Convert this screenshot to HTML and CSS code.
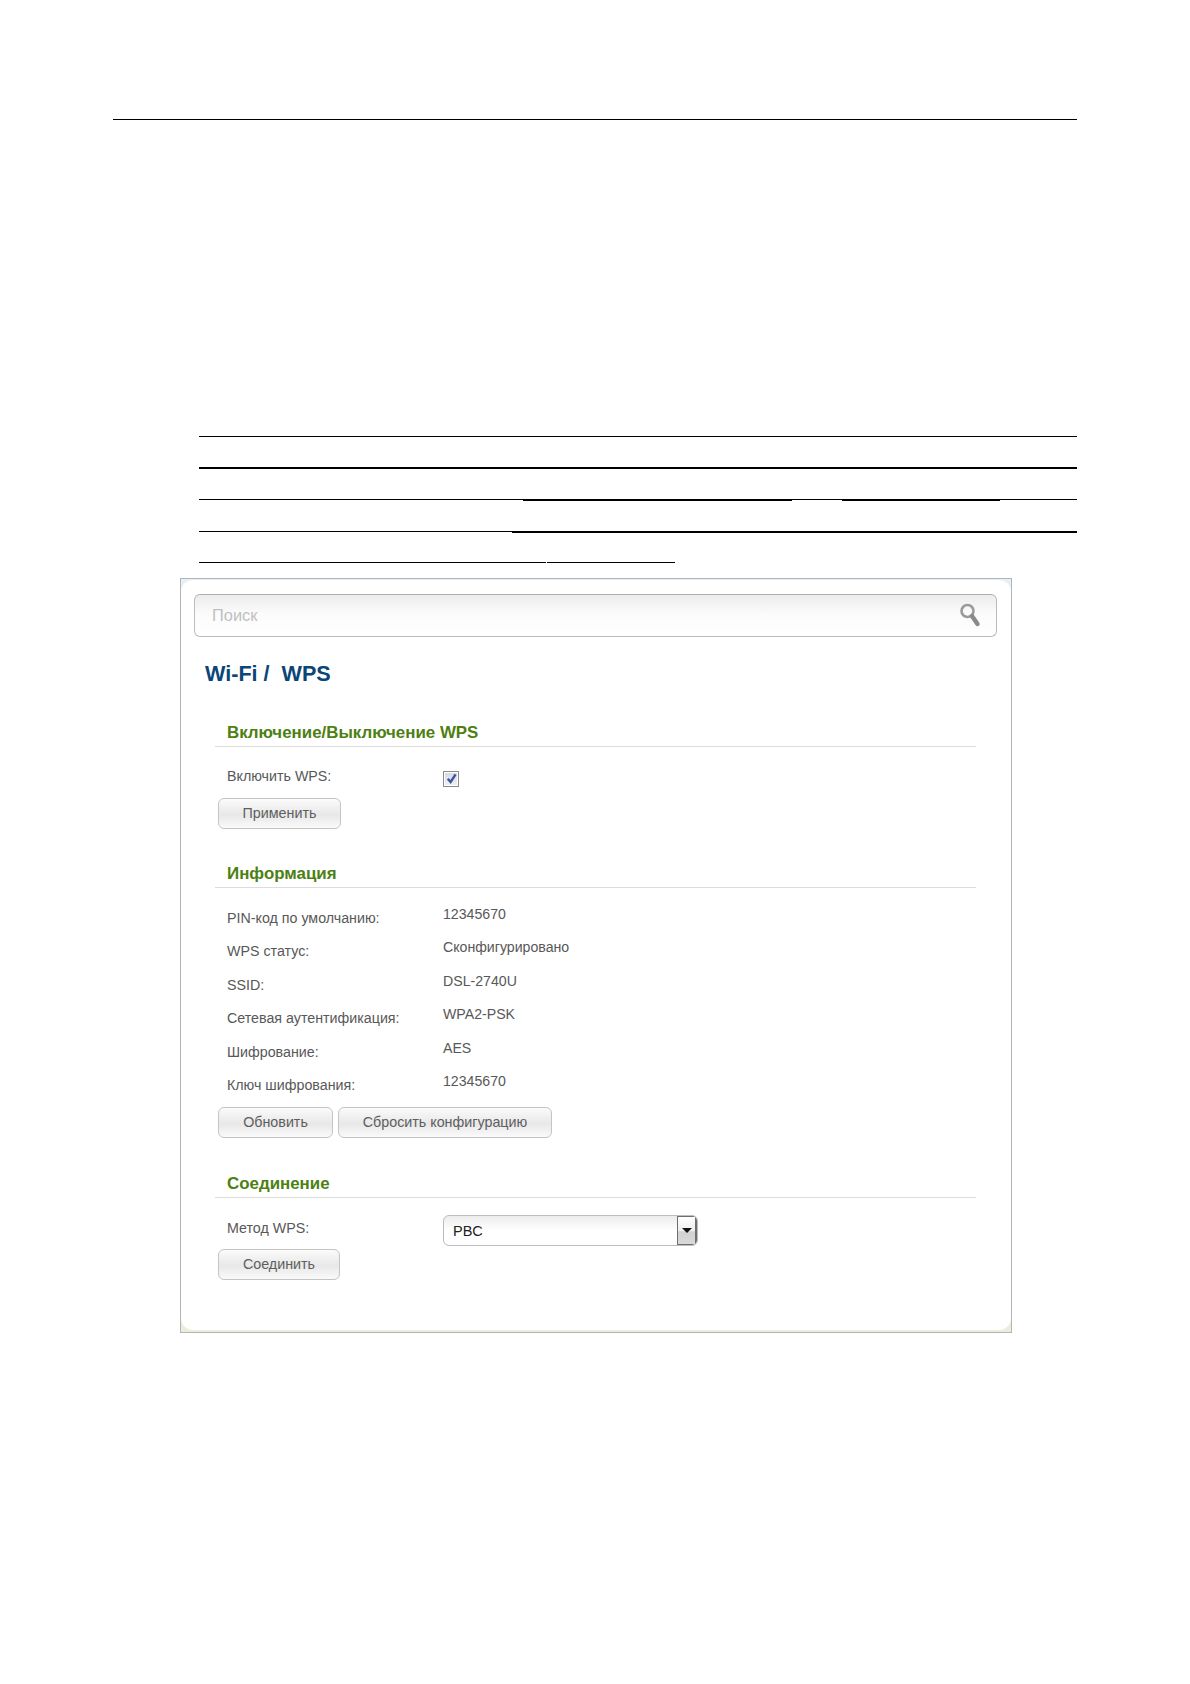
FILE: index.html
```html
<!DOCTYPE html>
<html lang="ru">
<head>
<meta charset="utf-8">
<title>Wi-Fi / WPS</title>
<link rel="stylesheet" href="styles.css">
</head>
<body>
<main class="page">
  <div class="head-rule"></div>
  <div class="doc-lines">
    <div class="doc-line"><span class="seg grow"></span></div>
    <div class="doc-line"><span class="seg thick grow"></span></div>
    <div class="doc-line">
      <span class="seg w324"></span><span class="seg thick w269"></span><span class="seg w50"></span><span class="seg thick w158"></span><span class="seg grow"></span>
    </div>
    <div class="doc-line doc-line-low"><span class="seg w313"></span><span class="seg thick grow"></span></div>
    <div class="doc-line doc-line-last"><span class="seg w347"></span><span class="seg w128 gap"></span></div>
  </div>
  <section class="panel">
    <div class="panel-inner">
      <div class="search">
        <span class="search-text">Поиск</span>
        <svg class="search-icon" width="22" height="26" viewBox="0 0 22 26">
          <circle cx="8.5" cy="9" r="6" fill="none" stroke="#9a9a9a" stroke-width="2.6"/>
          <path d="M13 14 L18.5 22" stroke="#8a8a8a" stroke-width="4.4" stroke-linecap="round"/>
        </svg>
      </div>
      <h1 class="title">Wi-Fi /&nbsp; WPS</h1>

      <div class="group group-first">
        <h2 class="group-title">Включение/Выключение WPS</h2>
        <div class="row row-check">
          <span class="label">Включить WPS:</span>
          <span class="checkbox">
            <svg width="13" height="13" viewBox="0 0 13 13"><path d="M2.8 6.8 L5.6 10 L10.6 2.4" fill="none" stroke="#3f55a0" stroke-width="2.4"/></svg>
          </span>
        </div>
        <div class="buttons"><button class="btn btn-apply">Применить</button></div>
      </div>

      <div class="group group-info">
        <h2 class="group-title">Информация</h2>
        <div class="info">
          <span class="label">PIN-код по умолчанию:</span><span class="value">12345670</span>
          <span class="label">WPS статус:</span><span class="value">Сконфигурировано</span>
          <span class="label">SSID:</span><span class="value">DSL-2740U</span>
          <span class="label">Сетевая аутентификация:</span><span class="value">WPA2-PSK</span>
          <span class="label">Шифрование:</span><span class="value">AES</span>
          <span class="label">Ключ шифрования:</span><span class="value">12345670</span>
        </div>
        <div class="buttons buttons-info">
          <button class="btn btn-refresh">Обновить</button>
          <button class="btn btn-reset">Сбросить конфигурацию</button>
        </div>
      </div>

      <div class="group group-conn">
        <h2 class="group-title">Соединение</h2>
        <div class="row row-select">
          <span class="label label-select">Метод WPS:</span>
          <div class="select">
            <span class="select-text">PBC</span>
            <span class="select-arrow"><span class="tri"></span></span>
          </div>
        </div>
        <div class="buttons"><button class="btn btn-connect">Соединить</button></div>
      </div>
    </div>
  </section>
</main>
</body>
</html>
```
FILE: styles.css
```css
* { box-sizing: border-box; }
html, body { margin: 0; padding: 0; background: #fff; }
body { width: 1190px; height: 1684px; overflow: hidden; font-family: "Liberation Sans", Arial, sans-serif; }
.page { padding: 119px 113px 0 113px; }
.head-rule { height: 1px; background: #000; }

.doc-lines { margin-left: 86px; padding-top: 285px; }
.doc-line { display: flex; height: 31.6px; align-items: flex-end; }
.doc-line-low { height: 32.4px; }
.doc-line-last { height: 30.8px; }
.seg { display: block; height: 1px; background: #000; }
.seg.thick { height: 2px; margin-bottom: -1px; }
.grow { flex: 1; }
.w324 { width: 324px; }
.w269 { width: 269px; }
.w50 { width: 50px; }
.w158 { width: 158px; }
.w313 { width: 313px; }
.w347 { width: 347px; }
.w128 { width: 128px; }
.gap { margin-left: 1px; }

.panel {
  margin: 15px 0 0 67px;
  width: 832px;
  height: 755px;
  border: 1px solid #b4b4b4;
  background: linear-gradient(#e4eff8, #e9eedd);
  padding: 1px 0 2px 0;
}
.panel-inner { height: 100%; background: #fff; border-radius: 12px; padding: 14px 14px 0 13px; }

.search {
  height: 43px;
  border: 1px solid #bcbcbc;
  border-top-color: #b0b0b0;
  border-radius: 6px;
  background: linear-gradient(#ececec, #fbfbfb 45%, #fff);
  display: flex;
  align-items: center;
  justify-content: space-between;
  padding: 0 15px 0 17px;
}
.search-text { font-size: 16.4px; color: #c0c0c0; padding-top: 1px; }
.search-icon { display: block; }

.title { margin: 24px 0 0 11px; font-size: 21.6px; line-height: 26px; font-weight: bold; color: #0a4677; }

.group { margin-left: 21px; margin-right: 21px; }
.group-first { margin-top: 36px; }
.group-info { margin-top: 35px; }
.group-conn { margin-top: 36px; }
.group-title {
  margin: 0;
  height: 24px;
  padding-left: 12px;
  border-bottom: 1px solid #dcdcdc;
  font-size: 16.9px;
  line-height: 20px;
  font-weight: bold;
  color: #4d7f12;
}
.label { font-size: 14.25px; line-height: 18px; color: #585858; }
.value { font-size: 14.15px; line-height: 18px; color: #585858; padding-top: 1px; }

.row { display: grid; grid-template-columns: 216px 1fr; padding-left: 12px; }
.row-check { margin-top: 20px; height: 31px; }
.checkbox {
  width: 16px; height: 16px;
  margin-top: 4px;
  border: 1px solid #8a8a8a;
  background: linear-gradient(#d6d9e4, #eef0f6);
  display: flex; align-items: center; justify-content: center;
  box-shadow: inset 0 0 0 1px #fff;
}
.checkbox svg { display: block; }

.buttons { display: flex; gap: 5px; padding-left: 3px; }
.btn {
  height: 31px;
  padding: 0;
  border: 1px solid #c4c4c4;
  border-radius: 6px;
  background: linear-gradient(#fbfbfb, #f0f0f0 30%, #e8e8e8 55%, #fafafa);
  font-family: inherit;
  font-size: 14.3px;
  color: #5e5e5e;
}
.btn-apply { width: 123px; }
.btn-refresh { width: 115px; }
.btn-reset { width: 214px; }
.btn-connect { width: 122px; }

.info {
  display: grid;
  grid-template-columns: 216px 1fr;
  grid-auto-rows: 33.5px;
  padding-left: 12px;
  margin-top: 16px;
}
.info .label { padding-top: 5px; }
.buttons-info { margin-top: 2px; }

.row-select { margin-top: 17px; height: 34px; }
.label-select { padding-top: 4px; }
.select {
  width: 255px; height: 31px;
  border: 1px solid #bdbdbd;
  border-radius: 6px;
  background: linear-gradient(#ececec, #fff 50%);
  display: flex;
  justify-content: space-between;
  overflow: hidden;
}
.select-text { font-size: 14.5px; line-height: 31px; padding-left: 9px; color: #222; }
.select-arrow {
  width: 20px;
  border: 1px solid #6e6e6e;
  border-right-width: 2px;
  background: linear-gradient(#fff, #eee 50%, #d2d2d2 55%, #d8d8d8);
  display: flex;
  justify-content: center;
  padding-top: 11px;
}
.tri { width: 0; height: 0; border: 5px solid transparent; border-top: 5px solid #111; border-bottom: 0; }
```
